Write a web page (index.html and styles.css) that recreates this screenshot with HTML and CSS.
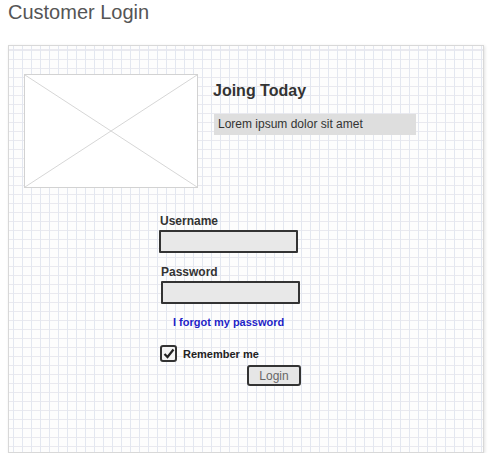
FILE: index.html
```html
<!DOCTYPE html>
<html lang="en">
<head>
  <meta charset="UTF-8" />
  <title>Customer Login</title>
  <link rel="stylesheet" href="styles.css">
</head>
<body>
  <h1 class="title">Customer Login</h1>

  <div class="panel">
    <div class="intro">
      <div class="placeholder">
        <svg width="172" height="112" viewBox="0 0 172 112">
          <line x1="0" y1="0" x2="172" y2="112" stroke="#d6d6d6" stroke-width="1"/>
          <line x1="172" y1="0" x2="0" y2="112" stroke="#d6d6d6" stroke-width="1"/>
        </svg>
      </div>
      <div class="intro-text">
        <h2>Joing Today</h2>
        <p class="lorem">Lorem ipsum dolor sit amet</p>
      </div>
    </div>

    <form class="login">
      <label class="field-label">Username</label>
      <input class="field" type="text">
      <label class="field-label pw">Password</label>
      <input class="field pw" type="password">
      <a class="forgot" href="#">I forgot my password</a>
      <div class="remember">
        <span class="check">
          <svg width="12" height="11" viewBox="0 0 12 11"><path d="M1.5 6 L4.5 9 L10.5 1.5" fill="none" stroke="#222" stroke-width="2.2"/></svg>
        </span>
        <span>Remember me</span>
      </div>
      <button class="btn" type="button">Login</button>
    </form>
  </div>
</body>
</html>
```

FILE: styles.css
```css
body {
  margin: 0;
  padding: 0 8px;
  font-family: "Liberation Sans", Arial, sans-serif;
  background: #fff;
}

.title {
  margin: 0;
  padding-top: 1px;
  font-size: 20px;
  font-weight: normal;
  color: #555;
  height: 44px;
}

.panel {
  box-sizing: border-box;
  width: 476px;
  height: 408px;
  border: 1px solid #d8d8d8;
  box-shadow: 1px 1px 3px rgba(0,0,0,0.12);
  background-color: #fdfdfd;
  background-image:
    repeating-linear-gradient(to right, #e3e7f0 0, #e3e7f0 1px, transparent 1px, transparent 9px),
    repeating-linear-gradient(to bottom, #e9e9ef 0, #e9e9ef 1px, transparent 1px, transparent 9px);
  background-position: 4px 4px;
  padding: 28px 0 0 15px;
}

.intro {
  display: flex;
  gap: 15px;
}

.placeholder {
  width: 172px;
  height: 112px;
  background: #fff;
  border: 1px solid #d2d2d2;
}

.placeholder svg {
  display: block;
}

.intro-text h2 {
  margin: 8px 0 0;
  font-size: 16px;
  color: #333;
}

.lorem {
  margin: 14px 0 0 1px;
  width: 198px;
  height: 21px;
  line-height: 21px;
  padding-left: 4px;
  background: #dedede;
  font-size: 12px;
  color: #333;
}

.login {
  display: flex;
  flex-direction: column;
  align-items: flex-start;
  margin: 26px 0 0 135px;
}

.field-label {
  font-size: 12px;
  font-weight: bold;
  color: #333;
  margin-left: 1px;
}

.field-label.pw {
  margin-top: 12px;
  margin-left: 2px;
}

.field {
  margin: 2px 0 0;
  width: 139px;
  height: 23px;
  box-sizing: border-box;
  border: 2px solid #333;
  background: #e8e8e8;
  border-radius: 1px;
}

.field.pw {
  margin-left: 2px;
}

.forgot {
  margin: 12px 0 0 14px;
  font-size: 11px;
  font-weight: bold;
  color: #1f1fc8;
  text-decoration: none;
}

.remember {
  display: flex;
  align-items: center;
  gap: 6px;
  margin: 17px 0 0 1px;
  font-size: 11px;
  font-weight: bold;
  color: #222;
}

.check {
  width: 17px;
  height: 17px;
  box-sizing: border-box;
  border: 2px solid #333;
  border-radius: 3px;
  display: flex;
  align-items: center;
  justify-content: center;
  background: #f4f4f4;
}

.btn {
  margin: 3px 0 0 88px;
  width: 54px;
  height: 21px;
  padding: 0;
  border: 2px solid #333;
  border-radius: 3px;
  background: #e6e6e6;
  font-family: "Liberation Sans", Arial, sans-serif;
  font-size: 12px;
  color: #666;
}
```
